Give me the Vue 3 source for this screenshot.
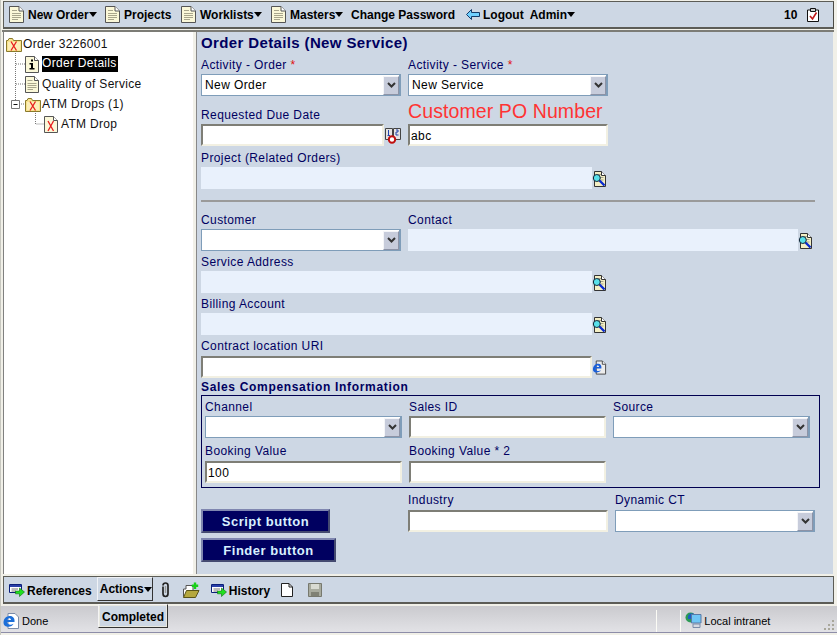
<script setup>
const topItems = [
  { text: 'New Order', caret: true, w: 96 },
  { text: 'Projects', caret: false, w: 76 },
  { text: 'Worklists', caret: true, w: 90 },
  { text: 'Masters', caret: true, w: 80 }
]
</script>

<template>
  <div class="window">
    <svg class="defs" aria-hidden="true">
      <symbol id="wide" viewBox="0 0 15 17">
        <path d="M.5.5H10L14.500 5V16.500H.5Z" fill="#fbf8d8" stroke="#555"/>
        <path d="M10 .5V5H14.500" fill="#fff" stroke="#555"/>
        <path d="M3 4.500H8M3 7.500H12M3 9.500H12M3 11.500H12M3 13.500H9" stroke="#a9a68c"/>
      </symbol>
      <symbol id="page" viewBox="0 0 15 17">
        <path d="M.5.5H9.500L13.500 4.500V16.500H.5Z" fill="#fbf8d8" stroke="#555"/>
        <path d="M9.500.5V4.500H13.500" fill="#fff" stroke="#555"/>
        <path d="M2.500 4.500H7.500M2.500 7.500H11.500M2.500 9.500H11.500M2.500 11.500H11.500M2.500 13.500H8" stroke="#a9a68c"/>
      </symbol>
      <symbol id="infodoc" viewBox="0 0 15 17">
        <path d="M.5.5H9.500L13.500 4.500V16.500H.5Z" fill="#fbf8d8" stroke="#555"/>
        <path d="M9.500.5V4.500H13.500" fill="#fff" stroke="#555"/>
        <path d="M6 3.500h2v2H6zM4.500 7h3.500v5h1.500v1.500H4.500V12H6V8.500H4.500z" fill="#000"/>
      </symbol>
      <symbol id="xdoc" viewBox="0 0 15 17">
        <path d="M.5.5H9.500L13.500 4.500V16.500H.5Z" fill="#fbf8d8" stroke="#555"/>
        <path d="M9.500.5V4.500H13.500" fill="#fff" stroke="#555"/>
        <path d="M4 5 9.500 15M9.500 5 4 15" stroke="#e81c1c" stroke-width="1.300"/>
      </symbol>
      <symbol id="xfolder" viewBox="0 0 16 15">
        <path d="M.5 3.500H2L3 1.500H6.500L7.500 3.500H15.500V14.500H.5Z" fill="#f7e28c" stroke="#8a7a2c"/>
        <path d="M2 5H14V13H2Z" fill="#fbeeb8"/>
        <path d="M5 4.500 10.500 13.500M10.500 4.500 5 13.500" stroke="#e81c1c" stroke-width="1.300"/>
      </symbol>
      <symbol id="finddoc" viewBox="0 0 15 16">
        <path d="M2.500.5H9.500L13.500 4.500V15.500H2.500Z" fill="#f4efc4" stroke="#333"/>
        <path d="M9.500.5V4.500H13.500" fill="#fff" stroke="#333"/>
        <path d="M6 3.500H9M8 6.500H11.500M9 9H11.500" stroke="#a9a68c"/>
        <path d="M7.500 9.500 12.500 14.500" stroke="#0a2bd0" stroke-width="2.400"/>
        <circle cx="4.800" cy="7" r="3.500" fill="#58e0ea" stroke="#123"/>
      </symbol>
      <symbol id="iedoc" viewBox="0 0 16 16">
        <path d="M4.500.5H11L14.500 4V14.500H4.500Z" fill="#ececec" stroke="#444"/>
        <path d="M11 .5V4H14.500" fill="#fff" stroke="#444"/>
        <path d="M1 9.500C1 5.500 4 3.500 6.500 3.500C9 3.500 10.500 5.500 10 8.500H4C4 11.500 7.500 12 9.500 10.500C8 13.500 1 14 1 9.500ZM4.200 7H7.600C7.500 4.800 4.500 4.800 4.200 7Z" fill="#1a5fd8"/>
      </symbol>
      <symbol id="cal" viewBox="0 0 16 17">
        <path d="M.5 1.500H7.500V12.500H.5ZM8.500 1.500H15.500V12.500H8.500Z" fill="#e4e4e4" stroke="#444"/>
        <path d="M3.500 3V8M2.500 8.500H5M11 3H13V5H11V8H13.500" stroke="#2244aa" fill="none"/>
        <circle cx="7" cy="12.500" r="3.200" fill="#fff" stroke="#c01010" stroke-width="2"/>
      </symbol>
      <symbol id="refarrow" viewBox="0 0 16 13">
        <path d="M.5.5H12.500V8.500H.5Z" fill="#fff" stroke="#0b1f7a"/>
        <path d="M1 1H12V3H1Z" fill="#2a3fa8"/>
        <path d="M2.500 5H9M2.500 7H7" stroke="#777"/>
        <path d="M6.500 7H10.500V4L15.500 8L10.500 12.500V9.800H6.500Z" fill="#1fe01f" stroke="#0c6b0c" stroke-width=".6"/>
      </symbol>
      <symbol id="clip" viewBox="0 0 11 16">
        <path d="M3 4.500V11.500C3 13 4 14.500 5.500 14.500C7 14.500 8 13 8 11.500V3.500C8 2 7 1 5.500 1C4 1 3 2 3 3.500" fill="none" stroke="#222" stroke-width="1.700"/>
        <path d="M5.500 4V11" stroke="#999" stroke-width="1.400"/>
      </symbol>
      <symbol id="addfolder" viewBox="0 0 17 16">
        <path d="M.5 14.500V7H3V3.500H10V14.500Z" fill="#fff" stroke="#555"/>
        <path d="M.5 15.500 3.500 8.500H16L12.500 15.500Z" fill="#b5a83e" stroke="#5a5418"/>
        <path d="M12 .5V7M8.800 3.700H15.200" stroke="#18d018" stroke-width="2.400"/>
      </symbol>
      <symbol id="blank" viewBox="0 0 12 14">
        <path d="M.5.5H8L11.500 4V13.500H.5Z" fill="#fff" stroke="#222"/>
        <path d="M8 .5V4H11.500" fill="none" stroke="#222"/>
      </symbol>
      <symbol id="floppy" viewBox="0 0 14 14">
        <path d="M.5.500H13.500V13.500H.5Z" fill="#a8ab9e" stroke="#77796e"/>
        <path d="M3 1H11V6H3Z" fill="#d9dbd2"/>
        <path d="M3 9H11V13H3Z" fill="#7f8174"/>
      </symbol>
      <symbol id="back" viewBox="0 0 14 11">
        <path d="M5.500.5V3.500H13.500V7.500H5.500V10.500L.5 5.500Z" fill="#6fd0ff" stroke="#123a6a"/>
      </symbol>
      <symbol id="clipboard" viewBox="0 0 12 14">
        <path d="M.5 2H11.500V13.500H.5Z" fill="#fff" stroke="#111"/>
        <path d="M3.500.5H8.500V3.500H3.500Z" fill="#ccc" stroke="#111"/>
        <path d="M3 8L5.500 11L9.500 4.500" fill="none" stroke="#c01818" stroke-width="1.600"/>
      </symbol>
      <symbol id="ie" viewBox="0 0 16 16">
        <path d="M5 .5H12L15.500 4V15.500H5Z" fill="#fff" stroke="#7b8ca8"/>
        <path d="M.5 9.500C.5 5 4 3 7 3C10 3 12 5.500 11.500 9H4.300C4.300 12 8 12.500 10.500 10.800C9 15 .5 15 .5 9.500ZM4.500 7H8C7.800 4.800 4.800 4.800 4.500 7Z" fill="#1c6fd8"/>
      </symbol>
      <symbol id="globe" viewBox="0 0 17 17">
        <circle cx="5.500" cy="5.500" r="5" fill="#2c9a54"/>
        <path d="M5 1.500H9V4H6V7H3V4Z" fill="#1b5fc4"/>
        <path d="M6.500 2.500H16V11H6.500Z" fill="#6fc6f5" stroke="#5a7aa6"/>
        <path d="M8 12H15V15.500H8Z" fill="#d5d9e2" stroke="#7b8ca8"/>
      </symbol>
    </svg>

    <header class="topbar">
      <a v-for="item in topItems" :key="item.text" class="tbitem" :style="{ width: item.w + 'px' }">
        <svg class="ic15"><use href="#wide" /></svg>
        <span>{{ item.text }}</span>
        <i v-if="item.caret" class="caret"></i>
      </a>
      <a class="tbitem change">Change Password</a>
      <a class="tbitem logout"><svg class="back"><use href="#back" /></svg><span>Logout</span></a>
      <a class="tbitem admin"><span>Admin</span><i class="caret"></i></a>
      <span class="count">10</span>
      <svg class="clipboard"><use href="#clipboard" /></svg>
    </header>

    <div class="panes">
      <nav class="tree">
        <svg class="lines" width="60" height="100">
          <path d="M10.500 20V71M11 31H22M11 51H22M16 71H22M30.500 80V91H41" fill="none" stroke="#777" stroke-dasharray="1 1"/>
          <path d="M6.500 67.500H14.500V75.500H6.500Z" fill="#fff" stroke="#777"/>
          <path d="M8.500 71.500H12.500" stroke="#111"/>
        </svg>
        <div class="node n0"><svg class="ic16"><use href="#xfolder" /></svg><span>Order 3226001</span></div>
        <div class="node n1"><svg class="ic15"><use href="#infodoc" /></svg><span class="sel">Order Details</span></div>
        <div class="node n1"><svg class="ic15"><use href="#page" /></svg><span>Quality of Service</span></div>
        <div class="node n1"><svg class="ic16"><use href="#xfolder" /></svg><span>ATM Drops (1)</span></div>
        <div class="node n2"><svg class="ic15"><use href="#xdoc" /></svg><span>ATM Drop</span></div>
      </nav>

      <main class="form">
        <h1>Order Details (New Service)</h1>

        <div class="row r1">
          <div class="field w200">
            <label>Activity - Order <em>*</em></label>
            <div class="select"><span>New Order</span><b class="drop"><svg width="9" height="6"><path d="M1 1L4.500 4.500L8 1" fill="none" stroke="#333" stroke-width="2"/></svg></b></div>
          </div>
          <div class="field w200">
            <label>Activity - Service <em>*</em></label>
            <div class="select"><span>New Service</span><b class="drop"><svg width="9" height="6"><path d="M1 1L4.500 4.500L8 1" fill="none" stroke="#333" stroke-width="2"/></svg></b></div>
          </div>
        </div>

        <div class="row r2">
          <div class="field w200">
            <label>Requested Due Date</label>
            <div class="withicon">
              <input class="text w184" />
              <svg class="cal"><use href="#cal" /></svg>
            </div>
          </div>
          <div class="field w200">
            <label class="red">Customer PO Number</label>
            <input class="text w200" value="abc" />
          </div>
        </div>

        <div class="row r3">
          <div class="field">
            <label>Project (Related Orders)</label>
            <div class="withicon">
              <div class="ro w391"></div>
              <svg class="find"><use href="#finddoc" /></svg>
            </div>
          </div>
        </div>

        <hr />

        <div class="row r4">
          <div class="field w200">
            <label>Customer</label>
            <div class="select"><span></span><b class="drop"><svg width="9" height="6"><path d="M1 1L4.500 4.500L8 1" fill="none" stroke="#333" stroke-width="2"/></svg></b></div>
          </div>
          <div class="field">
            <label>Contact</label>
            <div class="withicon">
              <div class="ro w390"></div>
              <svg class="find"><use href="#finddoc" /></svg>
            </div>
          </div>
        </div>

        <div class="row r5">
          <div class="field">
            <label>Service Address</label>
            <div class="withicon">
              <div class="ro w391"></div>
              <svg class="find"><use href="#finddoc" /></svg>
            </div>
          </div>
        </div>

        <div class="row r5">
          <div class="field">
            <label>Billing Account</label>
            <div class="withicon">
              <div class="ro w391"></div>
              <svg class="find"><use href="#finddoc" /></svg>
            </div>
          </div>
        </div>

        <div class="row r5">
          <div class="field">
            <label class="tall">Contract location URI</label>
            <div class="withicon">
              <input class="text w391" />
              <svg class="find"><use href="#iedoc" /></svg>
            </div>
          </div>
        </div>

        <h2>Sales Compensation Information</h2>
        <section class="box">
          <div class="boxrow">
            <div class="field w197">
              <label>Channel</label>
              <div class="select"><span></span><b class="drop"><svg width="9" height="6"><path d="M1 1L4.500 4.500L8 1" fill="none" stroke="#333" stroke-width="2"/></svg></b></div>
            </div>
            <div class="field w197">
              <label>Sales ID</label>
              <input class="text w197" />
            </div>
            <div class="field w197">
              <label>Source</label>
              <div class="select"><span></span><b class="drop"><svg width="9" height="6"><path d="M1 1L4.500 4.500L8 1" fill="none" stroke="#333" stroke-width="2"/></svg></b></div>
            </div>
          </div>
          <div class="boxrow second">
            <div class="field w197">
              <label class="tall">Booking Value</label>
              <input class="text w197" value="100" />
            </div>
            <div class="field w197">
              <label class="tall">Booking Value * 2</label>
              <input class="text w197" />
            </div>
          </div>
        </section>

        <div class="lower">
          <div class="buttons">
            <button class="navy script">Script button</button>
            <button class="navy finder">Finder button</button>
          </div>
          <div class="field w200 ind">
            <label class="tall">Industry</label>
            <input class="text w200" />
          </div>
          <div class="field w200 dyn">
            <label class="tall">Dynamic CT</label>
            <div class="select"><span></span><b class="drop"><svg width="9" height="6"><path d="M1 1L4.500 4.500L8 1" fill="none" stroke="#333" stroke-width="2"/></svg></b></div>
          </div>
        </div>
      </main>
    </div>

    <footer class="bottombar">
      <a class="tbitem refs"><svg class="arrowic"><use href="#refarrow" /></svg><span>References</span></a>
      <a class="actions"><span>Actions</span><i class="caret"></i></a>
      <svg class="clip"><use href="#clip" /></svg>
      <svg class="addfolder"><use href="#addfolder" /></svg>
      <a class="tbitem hist"><svg class="arrowic"><use href="#refarrow" /></svg><span>History</span></a>
      <svg class="blank"><use href="#blank" /></svg>
      <svg class="floppy"><use href="#floppy" /></svg>
    </footer>

    <div class="statusbar">
      <svg class="ie"><use href="#ie" /></svg>
      <span class="done">Done</span>
      <i class="sep s1"></i>
      <i class="sep s2"></i>
      <svg class="globe"><use href="#globe" /></svg>
      <span class="zone">Local intranet</span>
      <svg class="grip" width="12" height="12">
        <path d="M9 1h2v2H9zM5 5h2v2H5zM9 5h2v2H9zM1 9h2v2H1zM5 9h2v2H5zM9 9h2v2H9z" fill="#a9a79b"/>
      </svg>
    </div>

    <div class="popup">Completed</div>
  </div>
</template>

<style>
html, body { margin: 0; background: #fff; }
</style>

<style scoped>
.window {
  position: relative;
  width: 837px;
  height: 635px;
  overflow: hidden;
  background: #f1f0e8;
  font-family: "Liberation Sans", Arial, sans-serif;
  font-size: 12px;
  color: #000;
  box-sizing: border-box;
  display: flex;
  flex-direction: column;
  padding: 1px 1px 0 1px;
  border-left: 1px solid #c8c8c0;
}
.defs { position: absolute; width: 0; height: 0; }
svg { display: block; flex: none; }

/* top toolbar */
.topbar {
  height: 28px;
  box-sizing: border-box;
  margin-left: 1px;
  margin-right: 2px;
  border: 1px solid #5c5c56;
  border-right-color: #4a4a44;
  border-bottom-width: 2px;
  background: #cdd7e4;
  display: flex;
  align-items: center;
  padding-left: 5px;
  font-weight: bold;
}
.tbitem { display: flex; align-items: center; flex: none; white-space: nowrap; }
.ic15 { width: 15px; height: 17px; margin-right: 4px; }
.ic16 { width: 16px; height: 15px; margin-right: 1px; }
.caret {
  width: 0; height: 0;
  border-left: 4.500px solid transparent;
  border-right: 4.500px solid transparent;
  border-top: 5px solid #000;
  display: inline-block;
  flex: none;
}
.logout { margin-left: 11px; }
.back { width: 14px; height: 11px; margin-right: 3px; }
.admin { margin-left: 6px; }
.count { margin-left: 209px; }
.clipboard { width: 12px; height: 14px; margin-left: 10px; }

/* panes */
.panes {
  display: flex;
  height: 544px;
  margin-top: 1px;
  border-top: 2px solid #7c7c76;
  margin-right: 2px;
  box-sizing: border-box;
  padding-left: 1px;
}
.tree {
  position: relative;
  width: 190px;
  flex: none;
  background: #fff;
  padding-top: 2px;
  box-sizing: border-box;
  color: #111;
  border-left: 1px solid #808080;
  letter-spacing: .3px;
}
.lines { position: absolute; left: 1px; top: 1px; }
.node { position: relative; height: 20px; display: flex; align-items: center; line-height: 15px; }
.n0 { padding-left: 2px; }
.n1 { padding-left: 21px; }
.n2 { padding-left: 40px; }
.n2 .ic15 { margin-right: 2px; }
.n1 .ic15 { margin-right: 2px; }
.sel { background: #000; color: #fff; padding: 0 1px 1px 0; }
.form {
  width: 637px;
  height: 542px;
  margin-left: 3px;
  box-sizing: border-box;
  background: #cdd7e4;
  padding: 3px 0 0 4px;
  border-left: 1px solid #888;
  color: #000060;
  letter-spacing: .4px;
}
h1 {
  margin: 0;
  height: 18px;
  line-height: 16px;
  font-size: 15px;
  font-weight: bold;
  color: #000060;
  letter-spacing: .37px;
}
.row { display: flex; gap: 7px; }
.r1 { margin-top: 3px; }
.r2 { margin-top: 10px; }
.r3 { margin-top: 3px; }
.r4 { margin-top: 9px; }
.r5 { margin-top: 2px; }
.field { display: flex; flex-direction: column; flex: none; }
label { height: 18px; line-height: 19px; display: block; white-space: nowrap; }
label.tall { height: 19px; }
label em { color: #e01010; font-style: normal; }
label.red { color: #ff3333; font-size: 19.500px; line-height: 10px; letter-spacing: .1px; }
.w200 { width: 200px; }
.w197 { width: 197px; }
.w184 { width: 184px; }
.w391 { width: 391px; }
.w390 { width: 390px; }
.select {
  height: 22px;
  box-sizing: border-box;
  border: 1px solid #7f9db9;
  border-width: 1px 2px 1px 1px;
  background: #fff;
  display: flex;
  align-items: center;
  justify-content: space-between;
  padding-left: 3px;
  color: #000;
}
.drop {
  width: 16px;
  height: 19px;
  box-sizing: border-box;
  background: #c7ccdb;
  border: 1px solid #f4f5f8;
  border-right-color: #8d93a6;
  border-bottom-color: #8d93a6;
  display: flex;
  align-items: center;
  justify-content: center;
}
.text {
  height: 22px;
  box-sizing: border-box;
  border: 2px solid;
  border-color: #7e7e76 #f2f0e2 #f2f0e2 #7e7e76;
  background: #fff;
  padding: 1px 0 0 1px;
  margin: 0;
  font: 12px "Liberation Sans", Arial, sans-serif;
  letter-spacing: .4px;
  color: #000;
  outline: none;
  display: block;
}
.withicon { display: flex; align-items: center; }
.ro { height: 22px; background: #e9f1fc; }
.find { width: 15px; height: 16px; margin-top: 2px; }
.cal { width: 16px; height: 17px; margin-left: 1px; margin-top: 1px; }
hr {
  border: 0;
  height: 2px;
  width: 614px;
  background: #9a9a9a;
  margin: 11px 0 0 0;
}
h2 {
  margin: 2px 0 0;
  height: 15px;
  line-height: 15px;
  font-size: 12px;
  font-weight: bold;
  color: #000060;
  letter-spacing: .67px;
}
.box {
  width: 619px;
  height: 93px;
  box-sizing: border-box;
  border: 1px solid #000050;
  padding: 2px 0 0 3px;
}
.boxrow { display: flex; gap: 7px; }
.second { margin-top: 4px; }
.lower { display: flex; margin-top: 3px; }
.buttons { width: 207px; flex: none; padding-top: 18px; display: flex; flex-direction: column; gap: 5px; align-items: flex-start; }
.dyn { margin-left: 7px; }
.navy {
  height: 24px;
  padding: 0;
  box-sizing: border-box;
  background: #000060;
  color: #d8f0ff;
  border: 2px solid;
  border-color: #7f86b0 #444a70 #444a70 #7f86b0;
  font: bold 13px "Liberation Sans", Arial, sans-serif;
  letter-spacing: .5px;
}
.script { width: 129px; }
.finder { width: 135px; }

/* bottom toolbar */
.bottombar {
  height: 28px;
  margin: 2px 2px 0 1px;
  box-sizing: border-box;
  border: 1px solid #5c5c56;
  border-bottom-width: 2px;
  background: #cdd7e4;
  display: flex;
  align-items: center;
  padding-left: 5px;
  font-weight: bold;
}
.refs, .hist { margin-top: 2px; }
.arrowic { width: 16px; height: 13px; margin-right: 2px; }
.actions {
  width: 56px;
  height: 24px;
  box-sizing: border-box;
  margin-left: 5px;
  border: 1px solid;
  border-color: #f0f2f6 #333 #333 #f0f2f6;
  display: flex;
  align-items: center;
  padding-left: 2px;
  margin-bottom: 1px;
}
.clip { width: 11px; height: 16px; margin-left: 7px; }
.addfolder { width: 17px; height: 16px; margin-left: 12px; }
.hist { margin-left: 11px; }
.blank { width: 12px; height: 14px; margin-left: 11px; }
.floppy { width: 14px; height: 14px; margin-left: 15px; }

/* status bar */
.statusbar {
  position: relative;
  height: 27px;
  margin: 2px -1px 0 -1px;
  box-sizing: border-box;
  background: linear-gradient(#cacace, #e2e2e6);
  border-bottom: 1px solid #8d8da8;
  display: flex;
  align-items: center;
  padding: 3px 0 0 2px;
  font-size: 11px;
}
.ie { width: 16px; height: 16px; }
.done { margin-left: 3px; }
.sep { width: 1px; height: 22px; background: #fbfbf5; flex: none; }
.s1 { margin-left: 608px; }
.s2 { margin-left: 23px; }
.globe { width: 17px; height: 17px; margin-left: 4px; }
.zone { margin-left: 2px; }
.grip { position: absolute; right: 2px; bottom: 1px; }

.popup {
  position: absolute;
  left: 97px;
  top: 604px;
  width: 70px;
  height: 24px;
  box-sizing: border-box;
  background: #cdd7e4;
  border: 1px solid;
  border-color: #f4f4f4 #333 #333 #f4f4f4;
  outline: 1px solid #e8e8e0;
  outline-offset: -2px;
  display: flex;
  align-items: center;
  justify-content: center;
  font-weight: bold;
  padding-top: 1px;
}
</style>
